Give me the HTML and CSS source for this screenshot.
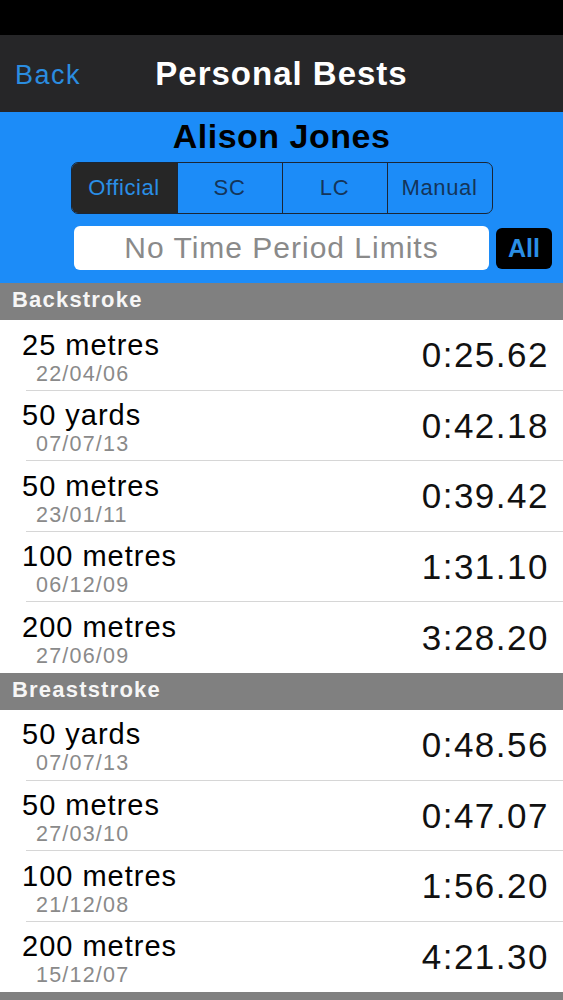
FILE: index.html
```html
<!DOCTYPE html>
<html lang="en">
<head>
<meta charset="utf-8">
<title>Personal Bests</title>
<link rel="stylesheet" href="styles.css">
</head>
<body>
<div class="status"></div>
<header class="navbar">
  <span class="back">Back</span>
  <h1 class="title">Personal Bests</h1>
  <span></span>
</header>
<section class="profile">
  <h2 class="name">Alison Jones</h2>
  <div class="segments">
    <span class="seg active">Official</span>
    <span class="seg">SC</span>
    <span class="seg">LC</span>
    <span class="seg">Manual</span>
  </div>
  <div class="filter">
    <div class="period">No Time Period Limits</div>
    <div class="all">All</div>
  </div>
</section>
<main class="list">
  <div class="sect">Backstroke</div>
  <div class="group">
    <div class="row"><div class="ev"><div class="dist">25 metres</div><div class="date">22/04/06</div></div><div class="time">0:25.62</div></div>
    <div class="row"><div class="ev"><div class="dist">50 yards</div><div class="date">07/07/13</div></div><div class="time">0:42.18</div></div>
    <div class="row"><div class="ev"><div class="dist">50 metres</div><div class="date">23/01/11</div></div><div class="time">0:39.42</div></div>
    <div class="row"><div class="ev"><div class="dist">100 metres</div><div class="date">06/12/09</div></div><div class="time">1:31.10</div></div>
    <div class="row"><div class="ev"><div class="dist">200 metres</div><div class="date">27/06/09</div></div><div class="time">3:28.20</div></div>
  </div>
  <div class="sect">Breaststroke</div>
  <div class="group">
    <div class="row"><div class="ev"><div class="dist">50 yards</div><div class="date">07/07/13</div></div><div class="time">0:48.56</div></div>
    <div class="row"><div class="ev"><div class="dist">50 metres</div><div class="date">27/03/10</div></div><div class="time">0:47.07</div></div>
    <div class="row"><div class="ev"><div class="dist">100 metres</div><div class="date">21/12/08</div></div><div class="time">1:56.20</div></div>
    <div class="row"><div class="ev"><div class="dist">200 metres</div><div class="date">15/12/07</div></div><div class="time">4:21.30</div></div>
  </div>
  <div class="sect"></div>
</main>
</body>
</html>
```

FILE: styles.css
```css
html, body {
  margin: 0;
  padding: 0;
  height: 1000px;
  overflow: hidden;
  background: #ffffff;
  font-family: "Liberation Sans", Arial, sans-serif;
}

.status {
  height: 35px;
  background: #000000;
}

.navbar {
  height: 77px;
  background: #262628;
  display: grid;
  grid-template-columns: 1fr auto 1fr;
  align-items: center;
}

.back {
  padding-left: 15px;
  padding-top: 2px;
  color: #2b8de0;
  font-size: 27px;
  letter-spacing: 1.5px;
  line-height: 34px;
}

.title {
  margin: 0;
  padding-top: 1px;
  color: #ffffff;
  font-size: 33px;
  font-weight: 700;
  letter-spacing: 1px;
  line-height: 40px;
}

.profile {
  background: #1c8cf8;
  padding: 4px 0 13px;
}

.name {
  margin: 0;
  text-align: center;
  font-size: 34px;
  font-weight: 700;
  letter-spacing: 0.5px;
  line-height: 40px;
  color: #000000;
}

.segments {
  width: 422px;
  height: 52px;
  margin: 6px auto 0;
  box-sizing: border-box;
  border: 1.5px solid #1a2636;
  border-radius: 7px;
  overflow: hidden;
  display: grid;
  grid-template-columns: repeat(4, 1fr);
}

.seg {
  display: flex;
  align-items: center;
  justify-content: center;
  font-size: 22px;
  letter-spacing: 0.6px;
  color: #14355a;
  border-left: 1.5px solid #1a2636;
}

.seg:first-child {
  border-left: none;
}

.seg.active {
  background: #262626;
  color: #2a8fe6;
}

.filter {
  display: flex;
  align-items: center;
  gap: 7px;
  padding-left: 74px;
  margin-top: 12px;
}

.period {
  width: 415px;
  height: 44px;
  background: #ffffff;
  border-radius: 6px;
  text-align: center;
  font-size: 30px;
  letter-spacing: 1px;
  line-height: 44px;
  color: #8a8a8a;
}

.all {
  width: 56px;
  height: 41px;
  background: #000000;
  border-radius: 6px;
  color: #2a8fe6;
  font-weight: 700;
  font-size: 25px;
  line-height: 41px;
  text-align: center;
}

.sect {
  height: 37px;
  box-sizing: border-box;
  background: #808080;
  color: #f6f6f6;
  font-weight: 700;
  font-size: 22px;
  letter-spacing: 1.2px;
  line-height: 33px;
  padding: 0 0 4px 12px;
}

.row {
  height: 70.6px;
  box-sizing: border-box;
  display: flex;
  justify-content: space-between;
  align-items: center;
  padding: 0 14px 0 22px;
  background: linear-gradient(#d6d6d6, #d6d6d6) no-repeat 26px 100% / calc(100% - 26px) 1px;
}

.row:last-child {
  background: none;
}

.ev {
  align-self: flex-start;
  padding-top: 8.5px;
}

.dist {
  font-size: 29px;
  letter-spacing: 1px;
  line-height: 33px;
  color: #000000;
}

.date {
  font-size: 21.5px;
  letter-spacing: 1.2px;
  line-height: 24px;
  color: #8a8a8a;
  padding-left: 14px;
}

.time {
  font-size: 35px;
  letter-spacing: 1.5px;
  line-height: 40px;
  color: #111111;
}
```
